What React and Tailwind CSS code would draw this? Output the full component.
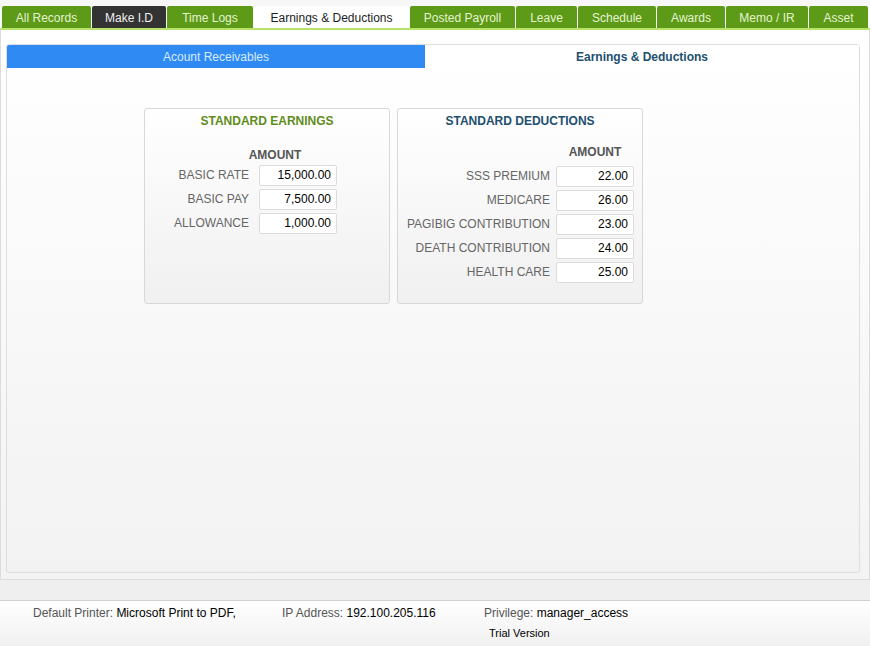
const tabs = [
  { label: 'All Records', w: 'w-[89px]' },
  { label: 'Make I.D', w: 'w-[74px]', dark: true },
  { label: 'Time Logs', w: 'w-[86px]' },
  { label: 'Earnings & Deductions', w: 'w-[155px]', active: true },
  { label: 'Posted Payroll', w: 'w-[105px]' },
  { label: 'Leave', w: 'w-[61px]' },
  { label: 'Schedule', w: 'w-[78px]' },
  { label: 'Awards', w: 'w-[68px]' },
  { label: 'Memo / IR', w: 'w-[82px]' },
  { label: 'Asset', w: 'w-[59px]' },
];

const earnings = [
  ['BASIC RATE', '15,000.00'],
  ['BASIC PAY', '7,500.00'],
  ['ALLOWANCE', '1,000.00'],
];

const deductions = [
  ['SSS PREMIUM', '22.00'],
  ['MEDICARE', '26.00'],
  ['PAGIBIG CONTRIBUTION', '23.00'],
  ['DEATH CONTRIBUTION', '24.00'],
  ['HEALTH CARE', '25.00'],
];

function Row({ label, value, tight }) {
  return (
    <div className="flex items-center h-[24px]">
      <div className={tight ? 'flex-1 text-right pr-[6px] text-[#666]' : 'flex-1 text-right pr-[10px] text-[#666]'}>{label}</div>
      <div className="w-[78px] h-[21px] bg-white border border-[#dcdcdc] rounded-[2px] text-right pr-[5px] leading-[19px] text-black">
        {value}
      </div>
    </div>
  );
}

function App() {
  return (
    <div className="h-[646px] w-[870px] bg-[#f1f1f1] flex flex-col text-[12px]" style={{ fontFamily: '"Liberation Sans", Arial, sans-serif' }}>
      {/* TABS */}
      <div className="h-[28px] bg-[#f7f7f7] flex items-end pl-[2px] gap-[1px]">
        {tabs.map(t => (
          <div
            key={t.label}
            className={
              t.active
                ? `${t.w} h-[22px] pt-[2px] bg-white text-[#222] flex items-center justify-center`
                : t.dark
                ? `${t.w} h-[22px] pt-[2px] bg-[#333333] text-[#f0f0f0] flex items-center justify-center rounded-t-[2px]`
                : `${t.w} h-[22px] pt-[2px] bg-[#5c9a18] text-[#e6f4cf] flex items-center justify-center rounded-t-[2px]`
            }
          >
            {t.label}
          </div>
        ))}
      </div>

      {/* MAIN */}
      <div className="h-[552px] border-t-[2px] border-[#b7e36a] border-x border-b border-x-[#dcdcdc] border-b-[#dcdcdc] bg-gradient-to-b from-white to-[#f3f3f3] px-[5px] pt-[14px] pb-[6px]">
        <div className="h-full border border-[#dedede] rounded-[3px] bg-gradient-to-b from-white to-[#f2f2f2] w-[854px]">
          <div className="flex h-[23px]">
            <div className="w-[418px] bg-[#2f8af4] text-[#d6ebff] flex items-center justify-center rounded-tl-[2px]">
              Acount Receivables
            </div>
            <div className="flex-1 bg-white text-[#1d4f6e] font-bold flex items-center justify-center">
              Earnings &amp; Deductions
            </div>
          </div>

          <div className="flex gap-[7px] pl-[137px] pt-[40px]">
            {/* EARNINGS */}
            <div className="w-[246px] h-[196px] border border-[#d8d8d8] rounded-[3px] bg-gradient-to-b from-white to-[#f0f0f0] pt-[3px]">
              <div className="text-center font-bold text-[#5f8c1c]">STANDARD EARNINGS</div>
              <div className="pr-[52px] pt-[16px]">
                <div className="flex justify-end">
                  <div className="w-[78px] mr-[23px] text-center font-bold text-[#555] h-[17px]">AMOUNT</div>
                </div>
                {earnings.map(([l, v]) => <Row key={l} label={l} value={v} />)}
              </div>
            </div>

            {/* DEDUCTIONS */}
            <div className="w-[246px] h-[196px] border border-[#d8d8d8] rounded-[3px] bg-gradient-to-b from-white to-[#f0f0f0] pt-[3px]">
              <div className="text-center font-bold text-[#1d4f6e]">STANDARD DEDUCTIONS</div>
              <div className="pr-[8px] pt-[13px]">
                <div className="flex justify-end">
                  <div className="w-[78px] text-center font-bold text-[#555] h-[17px]">AMOUNT</div>
                </div>
                <div className="pt-[4px]">
                  {deductions.map(([l, v]) => <Row key={l} label={l} value={v} tight />)}
                </div>
              </div>
            </div>
          </div>
        </div>
      </div>

      {/* FOOTER */}
      <div className="h-[21px] bg-[#efefef] border-b border-[#cfcfcf]"></div>
      <div className="flex-1 bg-gradient-to-b from-white to-[#f0f0f0]">
        <div className="flex pt-[3px] h-[20px]">
          <div className="w-[249px] pl-[33px] whitespace-nowrap"><span className="text-[#555]">Default Printer: </span><span className="text-black">Microsoft Print to PDF,</span></div>
          <div className="w-[202px] pl-[33px] whitespace-nowrap"><span className="text-[#555]">IP Address: </span><span className="text-black">192.100.205.116</span></div>
          <div className="pl-[33px] whitespace-nowrap"><span className="text-[#555]">Privilege: </span><span className="text-black">manager_access</span></div>
        </div>
        <div className="pl-[489px] pt-[4px] text-[11px] text-black">Trial Version</div>
      </div>
    </div>
  );
}

export default App;
